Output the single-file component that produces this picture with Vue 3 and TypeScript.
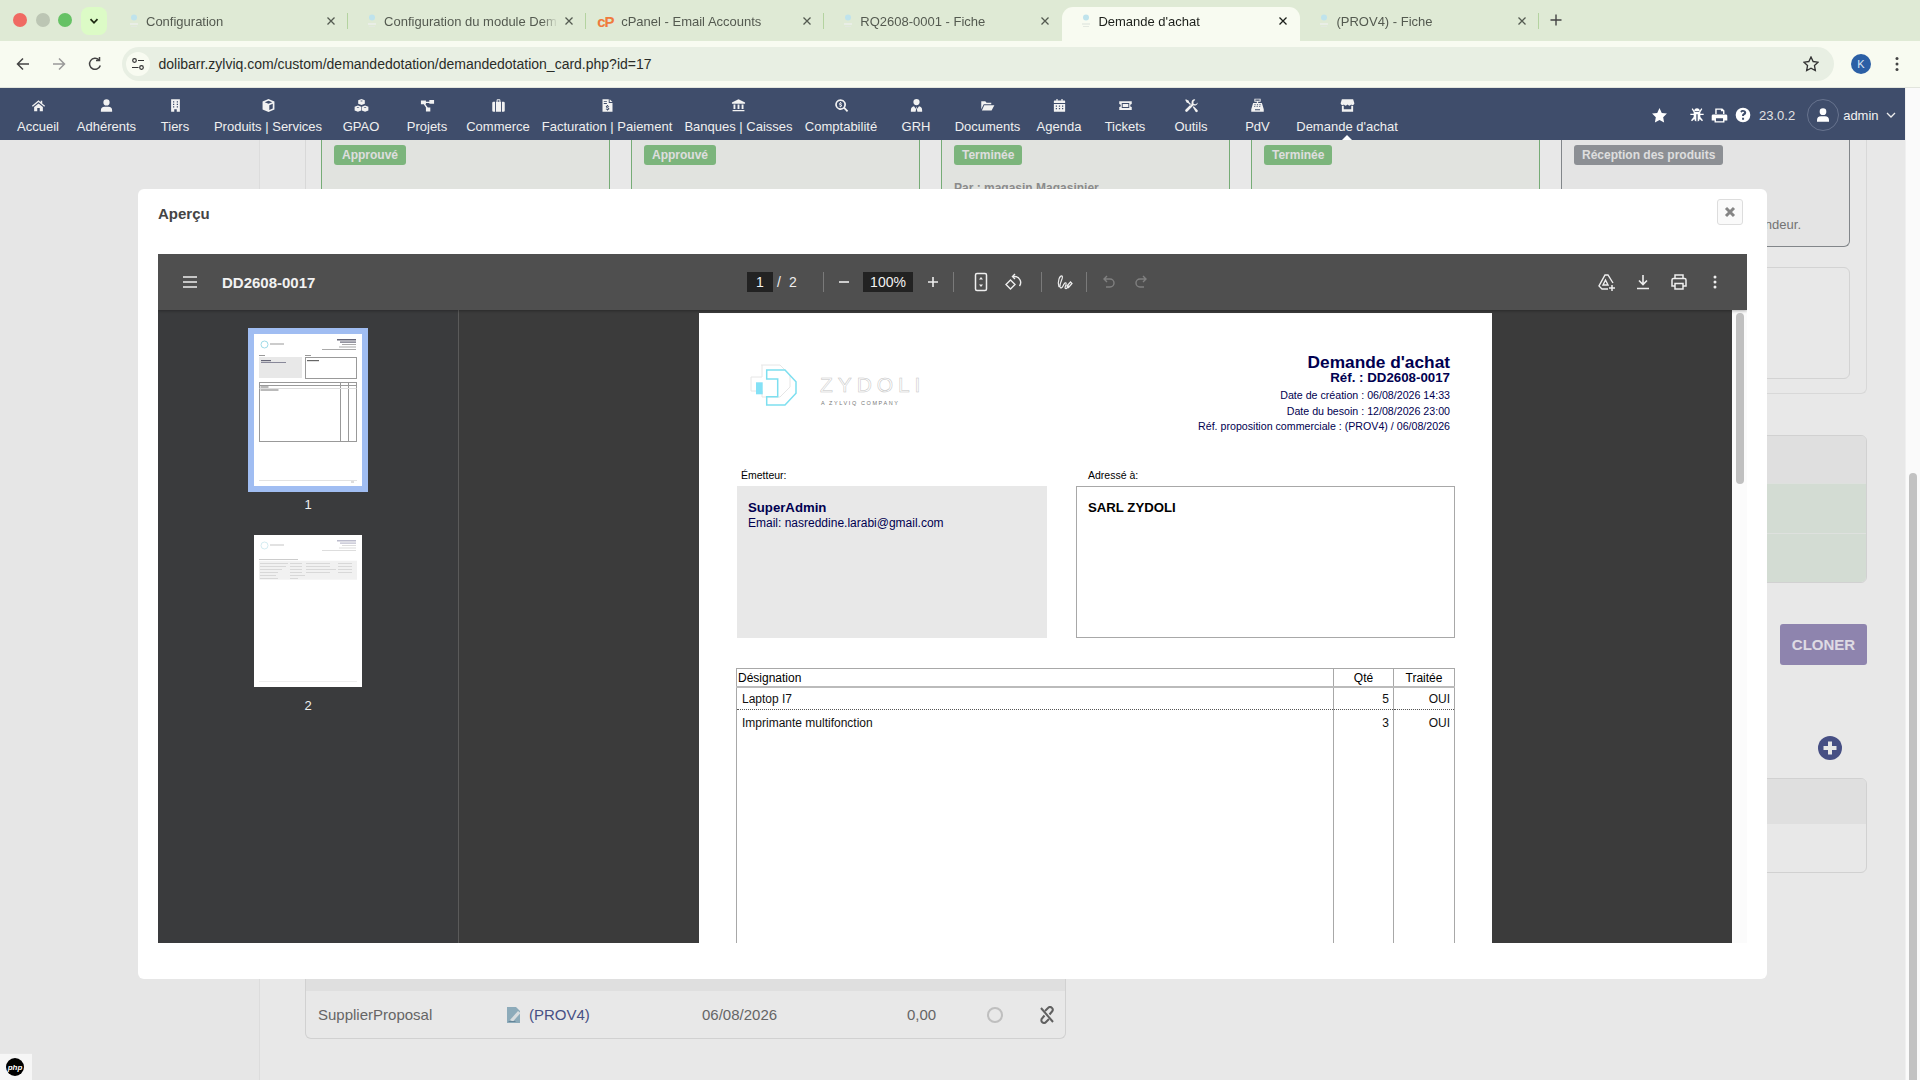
<template>
  <div class="screen">
    <header class="tabstrip">
      <div class="lights">
        <i class="light red"></i><i class="light grey"></i><i class="light green"></i>
      </div>
      <button class="tabsearch">
        <svg width="12" height="12" viewBox="0 0 12 12"><path d="M2.5 4.2 6 7.8l3.500-3.600" fill="none" stroke="#1d2a12" stroke-width="1.800" /></svg>
      </button>
      <div
        v-for="tab in tabs"
        :key="tab.title"
        class="tab"
        :class="{ active: tab.active, nosep: tab.nosep }"
      >
        <span v-if="tab.cpanel" class="fav-cp">cP</span>
        <svg v-else class="fav" width="12" height="16" viewBox="0 0 12 16">
          <circle cx="6" cy="4.500" r="3" fill="#bfe3ec" />
          <rect x="2" y="10" width="8" height="2" fill="#e9eee6" />
          <rect x="3" y="13" width="6" height="1" fill="#e3e8e0" />
        </svg>
        <span class="tab-title">{{ tab.title }}</span>
        <svg class="tab-close" width="10" height="10" viewBox="0 0 10 10"><path d="M1.500 1.500l7 7m0-7-7 7" stroke="currentColor" stroke-width="1.300" /></svg>
      </div>
      <svg class="newtab" width="12" height="12" viewBox="0 0 12 12"><path d="M6 .5v11M.5 6h11" stroke="#444" stroke-width="1.400" /></svg>
    </header>

    <div class="addressbar">
      <button class="chrome-btn">
        <svg width="16" height="16" viewBox="0 0 16 16"><path d="M14 8H3m5-5.500L2.500 8 8 13.500" fill="none" stroke="#444" stroke-width="1.500" /></svg>
      </button>
      <button class="chrome-btn">
        <svg width="16" height="16" viewBox="0 0 16 16"><path d="M2 8h11M8 2.500 13.500 8 8 13.500" fill="none" stroke="#999" stroke-width="1.500" /></svg>
      </button>
      <button class="chrome-btn">
        <svg width="16" height="16" viewBox="0 0 16 16"><path d="M13.300 9.500A5.500 5.500 0 1 1 12 4M12.500 1v3.500H9" fill="none" stroke="#444" stroke-width="1.500" /></svg>
      </button>
      <div class="omnibox">
        <span class="tune">
          <svg width="14" height="14" viewBox="0 0 14 14"><g fill="none" stroke="#333" stroke-width="1.200"><circle cx="3.500" cy="3.500" r="1.800" /><circle cx="10.500" cy="10.500" r="1.800" /><path d="M7 3.500h6M1 10.500h6.500" /></g></svg>
        </span>
        <span class="url">dolibarr.zylviq.com/custom/demandedotation/demandedotation_card.php?id=17</span>
        <svg class="url-star" width="16" height="16" viewBox="0 0 24 24"><path :d="icons.star" fill="none" stroke="#333" stroke-width="2" /></svg>
      </div>
      <span class="profile">K</span>
      <svg class="chrome-dots" width="4" height="16" viewBox="0 0 4 16"><circle cx="2" cy="2.500" r="1.500" /><circle cx="2" cy="8" r="1.500" /><circle cx="2" cy="13.500" r="1.500" /></svg>
    </div>

    <div class="viewport">
      <div class="site">
        <nav class="topnav">
          <a v-for="item in navItems" :key="item.label" class="nav-item" :class="{ current: item.current }">
            <svg width="15" height="15" viewBox="0 0 24 24"><path :d="icons[item.icon]" fill="#f2f2f2" fill-rule="evenodd" /></svg>
            <span>{{ item.label }}</span>
          </a>
          <div class="nav-tools">
            <svg class="t-star" width="17" height="17" viewBox="0 0 24 24"><path :d="icons.star" fill="#fff" /></svg>
            <svg class="t-bug" width="16" height="16" viewBox="0 0 24 24"><path :d="icons.bug" fill="#fff" fill-rule="evenodd" /></svg>
            <svg class="t-print" width="17" height="17" viewBox="0 0 24 24"><path :d="icons.print" fill="#fff" fill-rule="evenodd" /></svg>
            <svg class="t-help" width="16" height="16" viewBox="0 0 24 24"><path :d="icons.help" fill="#fff" fill-rule="evenodd" /></svg>
            <span class="version">23.0.2</span>
            <span class="avatar">
              <svg width="16" height="18" viewBox="0 0 24 24"><path :d="icons.user" fill="#fff" /></svg>
            </span>
            <span class="login">admin</span>
            <svg width="10" height="10" viewBox="0 0 10 10"><path d="M1 3l4 4 4-4" fill="none" stroke="#eee" stroke-width="1.300" /></svg>
          </div>
        </nav>

        <main class="page">
          <aside class="leftmenu"></aside>
          <div class="content">
            <section class="steps">
              <div class="step"><span class="badge ok">Approuvé</span></div>
              <div class="step"><span class="badge ok">Approuvé</span></div>
              <div class="step">
                <span class="badge ok">Terminée</span>
                <p class="step-by">Par : magasin Magasinier</p>
              </div>
              <div class="step"><span class="badge ok">Terminée</span></div>
              <div class="step-col">
                <div class="step waiting">
                  <span class="badge wait">Réception des produits</span>
                  <p class="step-note">Attente de la réception du vendeur.</p>
                </div>
                <div class="ghost-card"></div>
              </div>
            </section>

            <section class="lower">
              <div class="lower-left">
                <div class="links-card">
                  <div class="links-head"></div>
                  <div class="links-row">
                    <span>SupplierProposal</span>
                    <a class="prop-link">
                      <svg width="15" height="16" viewBox="0 0 15 16">
                        <path d="M0 0h9l4 4v12H0z" fill="#9cbccd" />
                        <path d="M3 13 11 4l2.500 2L6 14.500z" fill="#eef3f6" />
                        <path d="M1.500 14.500h7" stroke="#6f93a8" />
                      </svg>
                      (PROV4)
                    </a>
                    <span>06/08/2026</span>
                    <span>0,00</span>
                    <i class="status-dot"></i>
                    <svg width="16" height="18" viewBox="0 0 16 18">
                      <g fill="none" stroke="#6a6a6a" stroke-width="2">
                        <path d="M2 2l12 14" />
                        <path d="M6 5l3-3a2.500 2.500 0 0 1 4 3.500l-2.500 3" />
                        <path d="M10 13l-3 3a2.500 2.500 0 0 1-4-3.500l2.500-3" />
                      </g>
                    </svg>
                  </div>
                </div>
              </div>
              <div class="lower-right">
                <div class="items-card">
                  <div class="items-head"></div>
                  <div class="items-row"></div>
                  <div class="items-row"></div>
                </div>
                <button class="clone-btn">CLONER</button>
                <svg class="add-icon" width="24" height="24" viewBox="0 0 24 24">
                  <circle cx="12" cy="12" r="12" fill="#4e5792" />
                  <path d="M12 5.500v13M5.500 12h13" stroke="#fff" stroke-width="4" />
                </svg>
                <div class="notes-card">
                  <div class="notes-head"></div>
                </div>
              </div>
            </section>
          </div>
          <div class="backdrop"></div>
          <div class="php-tag">
            <span class="php-logo">php</span>
          </div>
        </main>
      </div>
      <div class="pagescroll"><i class="pagescroll-thumb"></i></div>
    </div>

    <div class="modal">
      <div class="modal-head">
        <span class="modal-title">Aperçu</span>
        <button class="modal-close">
          <svg width="12" height="12" viewBox="0 0 12 12"><path d="M2 2l8 8m0-8-8 8" stroke="#858585" stroke-width="3" /></svg>
        </button>
      </div>

      <div class="viewer">
        <div class="viewer-bar">
          <div class="bar-left">
            <svg width="20" height="20" viewBox="0 0 20 20"><path d="M3 5h14M3 10h14M3 15h14" stroke="#eee" stroke-width="1.500" /></svg>
            <span class="doc-name">DD2608-0017</span>
          </div>
          <span class="num-box page-box">1</span>
          <span class="page-of">/<b>2</b></span>
          <i class="bar-sep"></i>
          <button class="bar-btn zoom-out">
            <svg width="14" height="14" viewBox="0 0 14 14"><path d="M2 7h10" stroke="#eee" stroke-width="1.600" /></svg>
          </button>
          <span class="num-box zoom-box">100%</span>
          <button class="bar-btn zoom-in">
            <svg width="14" height="14" viewBox="0 0 14 14"><path d="M2 7h10M7 2v10" stroke="#eee" stroke-width="1.600" /></svg>
          </button>
          <i class="bar-sep"></i>
          <button class="bar-btn fit">
            <svg width="18" height="20" viewBox="0 0 18 20"><rect x="3.500" y="1.500" width="11" height="17" rx="1.500" fill="none" stroke="#eee" stroke-width="1.500" /><path d="M9 5l2 2.500H7zM9 15l2-2.500H7z" fill="#eee" /></svg>
          </button>
          <button class="bar-btn rotate">
            <svg width="20" height="20" viewBox="0 0 20 20"><g fill="none" stroke="#eee" stroke-width="1.400"><path d="M7.500 8l4.500 4.500-4.500 4.500L3 12.500z" /><path d="M10 4.500h1.500a6 6 0 0 1 5 9.500" /><path d="M12 2 9.500 4.500 12 7" /></g></svg>
          </button>
          <i class="bar-sep sep-ink"></i>
          <button class="bar-btn ink">
            <svg width="18" height="18" viewBox="0 0 18 18"><path d="M4 14C2 8 5 2 7 3c2 2-3 7-2 11 .5 1.500 2 1 3-1 1-2 2-4 3-3s-2 5-.5 5.500c1 .2 2.500-1.500 3-3M12 13l3.500-4 1.500 1.500-3.500 4z" fill="none" stroke="#eee" stroke-width="1.200" /></svg>
          </button>
          <i class="bar-sep"></i>
          <button class="bar-btn undo">
            <svg width="16" height="16" viewBox="0 0 16 16"><path d="M6 2 3 5l3 3M3 5h6a3.500 3.500 0 0 1 0 8H5" fill="none" stroke="#808080" stroke-width="1.400" /></svg>
          </button>
          <button class="bar-btn">
            <svg width="16" height="16" viewBox="0 0 16 16"><path d="M10 2l3 3-3 3M13 5H7a3.500 3.500 0 0 0 0 8h4" fill="none" stroke="#808080" stroke-width="1.400" /></svg>
          </button>
          <div class="bar-right">
            <button class="bar-btn wide">
              <svg width="20" height="20" viewBox="0 0 20 20"><g fill="none" stroke="#eee" stroke-width="1.400"><path d="M11 17H5l-3-3 6-11h3l5 8" /><path d="M8.500 8 6 13h5z" /></g><path d="M15 13v6M12 16h6" stroke="#eee" stroke-width="1.500" /></svg>
            </button>
            <button class="bar-btn wide">
              <svg width="18" height="18" viewBox="0 0 18 18"><path d="M9 2v9M5 7.500 9 11.500l4-4M3 15.500h12" fill="none" stroke="#eee" stroke-width="1.600" /></svg>
            </button>
            <button class="bar-btn wide">
              <svg width="18" height="18" viewBox="0 0 18 18"><g fill="none" stroke="#eee" stroke-width="1.500"><path d="M5 5V2h8v3" /><path d="M5 13H2V7a1.500 1.500 0 0 1 1.500-1.500h11A1.500 1.500 0 0 1 16 7v6h-3" /><path d="M5 10.500h8V16H5z" /></g></svg>
            </button>
            <button class="bar-btn wide">
              <svg width="4" height="14" viewBox="0 0 4 14"><circle cx="2" cy="2" r="1.500" fill="#eee" /><circle cx="2" cy="7" r="1.500" fill="#eee" /><circle cx="2" cy="12" r="1.500" fill="#eee" /></svg>
            </button>
          </div>
        </div>

        <div class="viewer-body">
          <div class="thumbs">
            <div class="thumb selected">
              <svg width="108" height="152" viewBox="0 0 108 152">
                <rect width="108" height="152" fill="#fff" />
                <circle cx="10.500" cy="10.500" r="3.500" fill="none" stroke="#9fdbe8" />
                <rect x="16" y="9" width="14" height="2" fill="#ccc" />
                <rect x="83" y="5" width="19" height="1.500" fill="#667" />
                <rect x="86" y="7.500" width="16" height="1.200" fill="#667" />
                <rect x="88" y="10" width="14" height="1" fill="#aaa" />
                <rect x="85" y="12.500" width="17" height="1" fill="#aaa" />
                <rect x="68" y="15" width="34" height="1" fill="#aaa" />
                <rect x="5" y="21" width="6" height="1" fill="#999" />
                <rect x="51" y="21" width="6" height="1" fill="#999" />
                <rect x="5" y="23" width="43" height="21" fill="#e8e8e8" />
                <rect x="7" y="26" width="10" height="1.200" fill="#667" />
                <rect x="7" y="28" width="25" height="1" fill="#889" />
                <rect x="51.500" y="23.500" width="51" height="21" fill="none" stroke="#999" />
                <rect x="53" y="26" width="12" height="1.200" fill="#666" />
                <rect x="5.500" y="48.500" width="97" height="59" fill="none" stroke="#999" />
                <path d="M86.500 48.500v59M94.500 48.500v59M5.500 51.500h97" stroke="#999" />
                <rect x="6.500" y="52.500" width="8" height="1" fill="#777" />
                <path d="M5.500 54.500h97" stroke="#ddd" />
                <rect x="6.500" y="55.500" width="18" height="1" fill="#777" />
                <path d="M5 146.500h98" stroke="#e2e2e2" />
                <rect x="97" y="147.500" width="3" height="1" fill="#bbb" />
              </svg>
            </div>
            <span class="thumb-num">1</span>
            <div class="thumb">
              <svg width="108" height="152" viewBox="0 0 108 152">
                <rect width="108" height="152" fill="#fff" />
                <circle cx="10.500" cy="10.500" r="3.500" fill="none" stroke="#d5edf2" />
                <rect x="16" y="9" width="14" height="2" fill="#e2e2e2" />
                <rect x="83" y="5" width="19" height="1.500" fill="#bbc" />
                <rect x="86" y="7.500" width="16" height="1.200" fill="#bbc" />
                <rect x="88" y="10" width="14" height="1" fill="#ddd" />
                <rect x="85" y="12.500" width="17" height="1" fill="#ddd" />
                <rect x="68" y="15" width="34" height="1" fill="#ddd" />
                <rect x="5" y="24" width="39" height="1" fill="#ccc" />
                <rect x="5" y="25.700" width="98" height="19" fill="#f1f1f1" />
                <g fill="#d2d2d2">
                  <rect x="6" y="28" width="28" height=".8" /><rect x="36" y="28" width="12" height=".8" /><rect x="52" y="28" width="24" height=".8" /><rect x="84" y="28" width="14" height=".8" />
                  <rect x="6" y="31" width="26" height=".8" /><rect x="36" y="31" width="12" height=".8" /><rect x="52" y="31" width="24" height=".8" /><rect x="84" y="31" width="14" height=".8" />
                  <rect x="6" y="34" width="22" height=".8" /><rect x="36" y="34" width="12" height=".8" /><rect x="52" y="34" width="30" height=".8" /><rect x="84" y="34" width="14" height=".8" />
                  <rect x="6" y="37" width="18" height=".8" /><rect x="36" y="37" width="12" height=".8" /><rect x="52" y="37" width="24" height=".8" /><rect x="84" y="37" width="14" height=".8" />
                  <rect x="6" y="40" width="16" height=".8" /><rect x="36" y="40" width="15" height=".8" />
                  <rect x="6" y="43" width="18" height=".8" /><rect x="36" y="43" width="8" height=".8" />
                </g>
                <path d="M5 146.500h98" stroke="#eee" />
              </svg>
            </div>
            <span class="thumb-num">2</span>
          </div>

          <div class="sheet-area">
            <article class="sheet">
              <div class="sheet-head">
                <div class="logo">
                  <svg width="70" height="60" viewBox="0 0 70 60">
                    <path d="M21.500 10H40l10 10v12L40 42H22v-6h-11V22h11V10z" fill="none" stroke="#e6e6e6" />
                    <path d="M26.700 15H45l11 11.700v11.600L45 50H26.700v-8.300h11V24h-11z" fill="none" stroke="#7ddff0" stroke-width="1.500" />
                    <rect x="16" y="27.300" width="6.700" height="12" fill="#84e1f6" />
                  </svg>
                  <div class="logo-text">
                    <span class="logo-name">ZYDOLI</span>
                    <span class="logo-tag">A ZYLVIQ COMPANY</span>
                  </div>
                </div>
                <div class="doc-meta">
                  <div class="doc-title">Demande d'achat</div>
                  <div class="doc-ref">Réf. : DD2608-0017</div>
                  <div class="doc-lines">
                    <div>Date de création : 06/08/2026 14:33</div>
                    <div>Date du besoin : 12/08/2026 23:00</div>
                    <div>Réf. proposition commerciale : (PROV4) / 06/08/2026</div>
                  </div>
                </div>
              </div>

              <div class="parties">
                <div class="party sender">
                  <div class="party-label">Émetteur:</div>
                  <div class="party-box">
                    <strong>SuperAdmin</strong>
                    <div class="party-mail">Email: nasreddine.larabi@gmail.com</div>
                  </div>
                </div>
                <div class="party receiver">
                  <div class="party-label">Adressé à:</div>
                  <div class="party-box">
                    <strong>SARL ZYDOLI</strong>
                  </div>
                </div>
              </div>

              <table class="lines">
                <thead>
                  <tr>
                    <th class="c-name">Désignation</th>
                    <th class="c-qty">Qté</th>
                    <th class="c-done">Traitée</th>
                  </tr>
                </thead>
                <tbody>
                  <tr v-for="line in lines" :key="line.name">
                    <td class="c-name">{{ line.name }}</td>
                    <td class="num">{{ line.qty }}</td>
                    <td class="num">OUI</td>
                  </tr>
                  <tr class="filler"><td></td><td></td><td></td></tr>
                </tbody>
              </table>
            </article>
          </div>

          <div class="viewer-scroll"><i class="viewer-thumb"></i></div>
        </div>
      </div>
    </div>
  </div>
</template>

<script setup lang="ts">
interface Tab {
  title: string
  active?: boolean
  cpanel?: boolean
  nosep?: boolean
}
interface NavItem {
  label: string
  icon: string
  current?: boolean
}

const tabs: Tab[] = [
  { title: 'Configuration' },
  { title: 'Configuration du module Dem' },
  { title: 'cPanel - Email Accounts', cpanel: true },
  { title: 'RQ2608-0001 - Fiche', nosep: true },
  { title: "Demande d'achat", active: true, nosep: true },
  { title: '(PROV4) - Fiche' },
]

const navItems: NavItem[] = [
  { label: 'Accueil', icon: 'home' },
  { label: 'Adhérents', icon: 'user' },
  { label: 'Tiers', icon: 'building' },
  { label: 'Produits | Services', icon: 'cube' },
  { label: 'GPAO', icon: 'cubes' },
  { label: 'Projets', icon: 'diagram' },
  { label: 'Commerce', icon: 'suitcase' },
  { label: 'Facturation | Paiement', icon: 'invoice' },
  { label: 'Banques | Caisses', icon: 'bank' },
  { label: 'Comptabilité', icon: 'search' },
  { label: 'GRH', icon: 'tie' },
  { label: 'Documents', icon: 'folder' },
  { label: 'Agenda', icon: 'calendar' },
  { label: 'Tickets', icon: 'ticket' },
  { label: 'Outils', icon: 'tools' },
  { label: 'PdV', icon: 'register' },
  { label: "Demande d'achat", icon: 'store', current: true },
]

const icons: Record<string, string> = {
  home: 'M12 3.500 1.500 12.500l1.300 1.500L12 6.300l9.200 7.700 1.300-1.500L18 8.700V4.500h-2.500v2.100zM5 14.500V21h5v-5h4v5h5v-6.500L12 8.600z',
  user: 'M12 12a5 5 0 1 0 0-10 5 5 0 0 0 0 10zm-3 2a6 6 0 0 0-6 6v2h18v-2a6 6 0 0 0-6-6z',
  building: 'M5 2h14v20h-5v-4h-4v4H5zM8 5v2h2V5zm6 0v2h2V5zM8 9v2h2V9zm6 0v2h2V9zM8 13v2h2v-2zm6 0v2h2v-2z',
  cube: 'M12 1.500 2.500 5.500v13l9.500 4 9.500-4v-13zM12 4.200l6 2.500-6 2.500-6-2.500zM13.300 11.400l5.500-2.300v7.700l-5.500 2.400z',
  cubes: 'M12 1.500l5.300 2v5.800L12 11.300 6.700 9.300V3.500zM6.300 12l5.200 2v6l-5.200 2L1 20v-6zM17.700 12l5.300 2v6l-5.300 2-5.200-2v-6zM12 3.800 9.600 4.700 12 5.600l2.400-.9zM6.300 14.200l-2.400.9 2.400.9 2.400-.9zM17.700 14.200l-2.400.9 2.400.9 2.400-.9z',
  diagram: 'M1.500 4h8v6h-8zM15 3h7.500v6H15zM9.500 15h7v6.500h-7zM9.500 6h5.500v2H9.500zM6 10h2.500l4 5h-3z',
  suitcase: 'M9 6V3.500A1.500 1.500 0 0 1 10.500 2h3A1.500 1.500 0 0 1 15 3.500V6h1v16H8V6zm1.500 0h3V3.500h-3zM6.500 6v16H4a2 2 0 0 1-2-2V8a2 2 0 0 1 2-2zM17.500 6H20a2 2 0 0 1 2 2v12a2 2 0 0 1-2 2h-2.500z',
  invoice: 'M4 2h10v6h6v14H4zM15.500 2l4.500 4.500h-4.500zM6 5v1.500h5V5zm0 3v1.500h5V8zM11.200 11h1.600v1.200c1 .1 1.800.6 2 1.100l-1 1c-.4-.4-1-.6-1.800-.6-.7 0-1 .2-1 .5 0 .8 4 .4 4 2.900 0 1.100-.9 1.800-2.200 2V20h-1.600v-1.100c-1-.1-1.900-.6-2.200-1.200l1-1c.5.5 1.200.8 2 .8s1.200-.3 1.200-.6c0-.9-3.900-.5-3.900-2.900 0-1 .8-1.700 1.900-1.900z',
  bank: 'M12 2 1.500 7v2h21V7zM4 10.500v7h3v-7zm6.500 0v7h3v-7zm6.500 0v7h3v-7zM2.500 19v2h19v-2z',
  search: 'M10.500 2a8.500 8.500 0 1 0 5.200 15.200l5 5 2-2-5-5A8.500 8.500 0 0 0 10.500 2zm0 2.600a5.900 5.900 0 1 1 0 11.800 5.900 5.900 0 0 1 0-11.800zM9.800 6.500v1.100c-1 .2-1.700.9-1.700 1.800 0 2 3.400 1.500 3.400 2.500 0 .3-.4.5-1 .5s-1.100-.2-1.600-.6l-.8.9c.4.5 1 .8 1.700 1v1h1.400v-1c1-.2 1.700-.9 1.700-1.800 0-2.100-3.400-1.600-3.400-2.600 0-.2.3-.4.9-.4.5 0 1 .2 1.400.5l.8-.9c-.4-.4-.9-.7-1.400-.8V6.500z',
  tie: 'M12 11.500a5 5 0 1 0 0-10 5 5 0 0 0 0 10zM8 13.200A6 6 0 0 0 3 19v3h7.500L12 15l1.500 7H21v-3a6 6 0 0 0-5-5.800L13.200 17 12 13.500 10.800 17z',
  folder: 'M2 5h6.500l2 2.500H18V10H6L2 18zM6.800 11.500H23L18.500 20H3z',
  calendar: 'M7 1.500h2V4h6V1.500h2V4h3a1 1 0 0 1 1 1v3H3V5a1 1 0 0 1 1-1h3zM3 9.500h18V21a1 1 0 0 1-1 1H4a1 1 0 0 1-1-1zM6 12v2h2v-2zm5 0v2h2v-2zm5 0v2h2v-2zM6 16v2h2v-2zm5 0v2h2v-2zm5 0v2h2v-2z',
  ticket: 'M2 5h20v4.500a2.500 2.500 0 0 0 0 5V19H2v-4.500a2.500 2.500 0 0 0 0-5zM6 8v8h12V8zM7.500 9.500h9v5h-9z',
  tools: 'M17 2a5 5 0 0 0-4.700 6.700L2.500 18.500a2.100 2.100 0 0 0 3 3l9.800-9.800A5 5 0 0 0 22 7l-3 3-3.500-.5L15 6l3-3.200A5 5 0 0 0 17 2zM3 2 2 3l2.500 4.500 2 .3 4 4 1.500-1.500-4-4-.3-2zM14 14.500l1.500-1.500 6 6a2 2 0 0 1-3 3z',
  register: 'M7 1h10v5h-4v2h6l3 10v4H2v-4L5 8h6V6H7zM8.500 2.500v2h7v-2zM7 10v1.500h2V10zm4 0v1.500h2V10zm4 0v1.500h2V10zM6.500 13v1.500h2V13zm4 0v1.500h2V13zm4 0v1.500h2V13zM8 18v1.500h8V18z',
  store: 'M3 2h18l2 6.500a3 3 0 0 1-5 2 4 4 0 0 1-6 0 4 4 0 0 1-6 0 3 3 0 0 1-5-2zM3 12.500h3V18h12v-5.500h3V22H3z',
  star: 'M12 1.500l3.200 6.800 7.300 1-5.300 5.100 1.300 7.400L12 18.300l-6.500 3.500 1.300-7.400L1.500 9.300l7.300-1z',
  bug: 'M8 6a4 4 0 0 1 8 0zM4 3l1.500-1L9 7h6l3.500-5L20 3l-3 5v2h5v2h-5v3l4 5-1.500 1.500L16 18a4 4 0 0 1-3 3.800V11h-2v10.800A4 4 0 0 1 8 18l-3.500 3.500L3 20l4-5v-3H2v-2h5V8z',
  print: 'M6 2h10l3 3v5h-2V6h-3V4H8v6H6zM3 10.500h18a2 2 0 0 1 2 2V19h-4v3H5v-3H1v-6.500a2 2 0 0 1 2-2zM7 16v4h10v-4z',
  help: 'M12 1a11 11 0 1 0 0 22 11 11 0 0 0 0-22zm0 3.500c2.800 0 4.800 1.700 4.800 4 0 2.400-2 3.100-3.200 4v1h-3v-1.500c0-1.800 3-2.300 3-3.600 0-.7-.7-1.200-1.700-1.200-1 0-1.800.5-2.400 1.300L8 6.500c1-1.300 2.300-2 4-2zM10.600 16h3v3h-3z',
}

const lines = [
  { name: 'Laptop I7', qty: 5 },
  { name: 'Imprimante multifonction', qty: 3 },
]
</script>

<style>
html,
body {
  margin: 0;
  overflow: hidden;
}
</style>

<style scoped>
.screen {
  position: relative;
  width: 1920px;
  height: 1080px;
  overflow: hidden;
  display: flex;
  flex-direction: column;
  background: #fff;
  font-family: "Liberation Sans", Arial, sans-serif;
}
button {
  border: 0;
  padding: 0;
  background: none;
  display: flex;
  align-items: center;
  justify-content: center;
}

/* browser chrome */
.tabstrip {
  height: 41px;
  flex: none;
  display: flex;
  align-items: flex-end;
  background: #dfead5;
}
.lights {
  display: flex;
  gap: 8.500px;
  margin: 0 0 14px 13px;
}
.light {
  width: 14px;
  height: 14px;
  border-radius: 50%;
}
.red { background: #f06a63; }
.grey { background: #bcc6b4; }
.green { background: #66c265; }
.tabsearch {
  width: 26px;
  height: 28px;
  margin: 0 3px 6px 9px;
  border-radius: 8px;
  background: #dcfbc6;
}
.tab {
  position: relative;
  width: 238.100px;
  height: 34px;
  flex: none;
  display: flex;
  align-items: center;
  padding: 0 12px 6px 18px;
  box-sizing: border-box;
  font-size: 13px;
  color: #545a50;
}
.tab::after {
  content: "";
  position: absolute;
  right: 0;
  top: 6px;
  height: 16px;
  width: 1px;
  background: #b4d3a0;
}
.tab.nosep::after,
.tab.active::after {
  display: none;
}
.tab.active {
  background: #f8fbf1;
  color: #1c1f1a;
  border-radius: 11px 11px 0 0;
}
.fav {
  margin-right: 6px;
  flex: none;
}
.fav-cp {
  width: 17px;
  margin: 0 7px 0 -7px;
  flex: none;
  font-size: 15px;
  font-weight: 700;
  letter-spacing: -1px;
  color: #ef7b3c;
}
.tab-title {
  flex: 1;
  overflow: hidden;
  white-space: nowrap;
  -webkit-mask-image: linear-gradient(to left, transparent 0, #000 16px);
  mask-image: linear-gradient(to left, transparent 0, #000 16px);
}
.tab-close {
  margin-left: 6px;
  flex: none;
}
.newtab {
  margin: 0 0 15px 11px;
}
.addressbar {
  height: 47px;
  flex: none;
  display: flex;
  align-items: center;
  padding-left: 5px;
  box-sizing: border-box;
  background: #f8fbf1;
  border-bottom: 1px solid #e2e5dd;
}
.chrome-btn {
  width: 36px;
  height: 34px;
}
.omnibox {
  width: 1712px;
  height: 34px;
  margin-left: 9px;
  display: flex;
  align-items: center;
  border-radius: 17px;
  background: #e8efe3;
}
.tune {
  width: 24px;
  height: 24px;
  margin-left: 4px;
  display: flex;
  align-items: center;
  justify-content: center;
  border-radius: 50%;
  background: #f8fbf1;
}
.url {
  margin-left: 8.500px;
  font-size: 14px;
  color: #2a2c28;
}
.url-star {
  margin-left: auto;
  margin-right: 15px;
}
.profile {
  width: 20px;
  height: 20px;
  margin-left: 17px;
  display: flex;
  align-items: center;
  justify-content: center;
  border-radius: 50%;
  background: #2b5fa5;
  color: #dbe6f5;
  font-size: 11px;
}
.chrome-dots {
  margin-left: 24px;
  fill: #444;
}

/* site */
.viewport {
  flex: 1;
  min-height: 0;
  display: flex;
}
.site {
  flex: 1;
  min-width: 0;
  display: flex;
  flex-direction: column;
}
.pagescroll {
  width: 15px;
  flex: none;
  background: #fafafa;
  border-left: 1px solid #f0f0f0;
  box-sizing: border-box;
  padding: 385px 3px 0 3px;
}
.pagescroll-thumb {
  display: block;
  height: 620px;
  border-radius: 4px;
  background: #c2c2c2;
}
.topnav {
  height: 52px;
  flex: none;
  padding-left: 4px;
  display: grid;
  grid-template-columns: 68px 69px 68px 118px 68px 64px 78px 140px 123px 82px 68px 75px 68px 64px 68px 65px 114px 1fr;
  background: #3f4d6b;
}
.nav-item {
  position: relative;
  display: flex;
  flex-direction: column;
  align-items: center;
  padding-top: 10px;
  color: #f0f0f0;
  font-size: 13px;
  white-space: nowrap;
}
.nav-item span {
  margin-top: 6px;
}
.nav-item.current::after {
  content: "";
  position: absolute;
  left: 50%;
  bottom: 0;
  margin-left: -5px;
  border-left: 5px solid transparent;
  border-right: 5px solid transparent;
  border-bottom: 5px solid #fff;
}
.nav-tools {
  display: flex;
  align-items: center;
  color: #e2e2e2;
  padding-top: 2px;
}
.t-star { margin-left: 247px; }
.t-bug { margin-left: 21px; }
.t-print { margin-left: 6px; }
.t-help { margin-left: 7px; }
.version {
  margin-left: 8px;
  font-size: 13px;
}
.avatar {
  width: 32px;
  height: 32px;
  margin-left: 12px;
  box-sizing: border-box;
  display: flex;
  align-items: center;
  justify-content: center;
  border: 1px solid #67738e;
  border-radius: 50%;
}
.login {
  margin: 0 7px 0 4px;
  font-size: 13px;
  color: #f2f2f2;
}
.page {
  position: relative;
  flex: 1;
  min-height: 0;
  display: flex;
  overflow: hidden;
}
.leftmenu {
  width: 260px;
  flex: none;
  box-sizing: border-box;
  background: #fdfdfd;
  border-right: 1px solid #f2f2f2;
}
.content {
  flex: 1;
  min-width: 0;
  padding: 0 38px 0 45px;
}
.backdrop {
  position: absolute;
  inset: 0;
  background: rgba(0, 0, 0, 0.09);
}
.steps {
  height: 254px;
  box-sizing: border-box;
  display: flex;
  align-items: flex-start;
  gap: 21px;
  padding-left: 15px;
  border: 1px solid #eeeeee;
  border-top: 0;
  border-radius: 0 0 6px 6px;
}
.step {
  width: 289px;
  height: 160px;
  flex: none;
  box-sizing: border-box;
  padding: 5px 12px 0;
  border: 1px solid #82bd82;
  border-top: 0;
  background: #f8faf6;
}
.step-col {
  width: 289px;
  flex: none;
}
.step.waiting {
  height: 107px;
  background: #fbfbfb;
  border-color: #8f9498;
  border-radius: 0 0 6px 6px;
}
.step-by {
  margin: 16px 0 0;
  font-size: 12px;
  line-height: 14px;
  font-weight: 700;
  color: #999;
}
.step-note {
  margin: 52px 36px 0 0;
  text-align: right;
  font-size: 13px;
  line-height: 15px;
  color: #7f7f7f;
  white-space: nowrap;
}
.badge {
  display: inline-block;
  padding: 0 8px;
  height: 20px;
  line-height: 20px;
  border-radius: 3px;
  font-size: 12px;
  font-weight: 700;
  color: #f4f4f4;
}
.ok { background: #89c789; }
.wait { background: #9a9ea3; }
.ghost-card {
  height: 112px;
  margin-top: 20px;
  box-sizing: border-box;
  border: 1px solid #e8e8e8;
  border-radius: 6px;
}
.lower {
  display: grid;
  grid-template-columns: 761px 1fr;
  gap: 24px;
  margin-top: 41px;
}
.links-card {
  margin-top: 515px;
  height: 89px;
  box-sizing: border-box;
  border: 1px solid #e6e6e6;
  border-top: 0;
  border-radius: 0 0 6px 6px;
}
.links-head {
  height: 41px;
  background: #f6f6f6;
}
.links-row {
  height: 47px;
  padding-left: 12px;
  display: grid;
  grid-template-columns: 189px 195px 205px 80px 52px auto;
  align-items: center;
  font-size: 15px;
  color: #707070;
}
.prop-link {
  display: flex;
  align-items: center;
  gap: 7px;
  color: #4e5792;
}
.status-dot {
  width: 16px;
  height: 16px;
  box-sizing: border-box;
  border: 2px solid #d2d2d2;
  border-radius: 50%;
}
.lower-right {
  display: flex;
  flex-direction: column;
  align-items: flex-end;
}
.items-card {
  width: 100%;
  height: 148px;
  box-sizing: border-box;
  overflow: hidden;
  border: 1px solid #e6e6e6;
  border-radius: 6px;
}
.items-head {
  height: 47px;
  background: #f6f6f6;
}
.items-row {
  height: 49.500px;
  background: #e8f2e8;
  border-top: 1px solid #f4f8f4;
  box-sizing: border-box;
}
.clone-btn {
  width: 87px;
  height: 41px;
  margin-top: 41px;
  border-radius: 3px;
  background: #9d92c0;
  color: #f4f1fb;
  font: 700 15px "Liberation Sans", Arial, sans-serif;
}
.add-icon {
  margin: 71px 25px 0 0;
}
.notes-card {
  width: 100%;
  height: 95px;
  margin-top: 18px;
  box-sizing: border-box;
  overflow: hidden;
  border: 1px solid #e6e6e6;
  border-radius: 6px;
}
.notes-head {
  height: 45px;
  background: #f6f6f6;
}
.php-tag {
  position: absolute;
  left: 0;
  bottom: 0;
  width: 32px;
  height: 27px;
  box-sizing: border-box;
  display: flex;
  align-items: center;
  justify-content: center;
  background: #f6f6f6;
  border-top: 1px solid #e8e8e8;
  padding-right: 2px;
}
.php-logo {
  width: 18px;
  height: 18px;
  display: flex;
  align-items: center;
  justify-content: center;
  border-radius: 50%;
  background: #000;
  color: #fff;
  font-size: 8px;
  font-weight: 700;
  font-style: italic;
}

/* preview dialog */
.modal {
  position: absolute;
  left: 138px;
  top: 189px;
  width: 1629px;
  height: 790px;
  box-sizing: border-box;
  padding: 0 20px;
  background: #fff;
  border-radius: 6px;
}
.modal-head {
  height: 65px;
  display: flex;
  align-items: flex-start;
  justify-content: space-between;
  padding-top: 10px;
  box-sizing: border-box;
}
.modal-title {
  margin-top: 6px;
  font-size: 15px;
  font-weight: 700;
  color: #444;
}
.modal-close {
  width: 26px;
  height: 26px;
  margin-right: 4px;
  box-sizing: border-box;
  border: 1px solid #ddd;
  border-radius: 3px;
  background: #fafafa;
}
.viewer {
  width: 1589px;
  height: 689px;
  display: flex;
  flex-direction: column;
  overflow: hidden;
}
.viewer-bar {
  height: 56px;
  flex: none;
  display: flex;
  align-items: center;
  background: #4f4f4f;
  box-shadow: 0 1px 3px rgba(0, 0, 0, 0.3);
  color: #eee;
  font-size: 14px;
  z-index: 1;
}
.bar-left {
  width: 589px;
  flex: none;
  display: flex;
  align-items: center;
  padding-left: 22px;
  box-sizing: border-box;
}
.doc-name {
  margin-left: 22px;
  font-size: 15px;
  font-weight: 700;
  color: #f2f2f2;
}
.num-box {
  height: 20px;
  line-height: 20px;
  text-align: center;
  background: #222;
  color: #f2f2f2;
}
.page-box { width: 26px; }
.zoom-box { width: 50px; }
.page-of {
  width: 50px;
  box-sizing: border-box;
  padding-left: 4px;
}
.page-of b {
  font-weight: 400;
  margin-left: 8px;
}
.bar-sep {
  width: 1px;
  height: 20px;
  flex: none;
  background: #7a7a7a;
}
.bar-btn {
  width: 32px;
  height: 28px;
  flex: none;
}
.zoom-out { width: 39px; }
.zoom-in { width: 40px; }
.fit { margin-left: 11px; }
.rotate { margin-right: 12px; }
.ink { width: 44px; }
.undo { margin-left: 6px; }
.bar-right {
  margin-left: auto;
  display: flex;
  padding-right: 14px;
}
.bar-btn.wide { width: 36px; }
.viewer-body {
  flex: 1;
  min-height: 0;
  display: flex;
}
.thumbs {
  width: 301px;
  flex: none;
  box-sizing: border-box;
  display: flex;
  flex-direction: column;
  align-items: center;
  padding-top: 24px;
  background: #3a3b3d;
  border-right: 1px solid #5a5a5a;
}
.thumb {
  display: flex;
  line-height: 0;
}
.thumb.selected {
  outline: 6px solid #a0bdf2;
}
.thumb-num {
  margin: 12px 0 24px;
  height: 13px;
  line-height: 13px;
  font-size: 13px;
  color: #f0f0f0;
}
.sheet-area {
  flex: 1;
  min-width: 0;
  display: flex;
  justify-content: center;
  overflow: hidden;
  padding-top: 3px;
  background: #3b3b3b;
}
.sheet {
  width: 793px;
  height: 1122px;
  flex: none;
  box-sizing: border-box;
  padding: 40px 37px 0 38px;
  background: #fff;
  color: #000;
}
.viewer-scroll {
  width: 15px;
  flex: none;
  box-sizing: border-box;
  padding: 3px 3px 0 4px;
  background: #fbfbfb;
}
.viewer-thumb {
  display: block;
  height: 171px;
  border-radius: 4px;
  background: #c0c0c0;
}

/* document */
.sheet-head {
  display: flex;
  justify-content: space-between;
  height: 82px;
}
.logo {
  display: flex;
  margin: 2px 0 0 3px;
  height: 60px;
}
.logo-text {
  display: flex;
  flex-direction: column;
  margin: 21px 0 0 10px;
}
.logo-name {
  font-size: 21px;
  line-height: 17px;
  letter-spacing: 4.900px;
  color: transparent;
  -webkit-text-stroke: 0.5px #c4c4c4;
}
.logo-tag {
  margin-top: 7px;
  padding-left: 1px;
  font-size: 5.500px;
  line-height: 7px;
  letter-spacing: 1.600px;
  color: #777;
}
.doc-meta {
  padding-right: 5px;
  text-align: right;
  color: #000050;
}
.doc-title {
  font-size: 17.300px;
  line-height: 18px;
  font-weight: 700;
}
.doc-ref {
  font-size: 13.300px;
  line-height: 14px;
  font-weight: 700;
}
.doc-lines {
  margin-top: 3px;
  font-size: 10.650px;
  line-height: 15.500px;
}
.parties {
  display: flex;
  gap: 29px;
  margin-top: 34px;
}
.party-label {
  height: 12px;
  line-height: 12px;
  font-size: 10.500px;
  margin-bottom: 5px;
}
.party-box {
  height: 152px;
  box-sizing: border-box;
}
.party strong {
  display: block;
  font-size: 13.200px;
  line-height: 16px;
}
.sender { width: 310px; }
.sender .party-label { padding-left: 4px; }
.sender .party-box {
  padding: 14px 11px;
  background: #e8e8e8;
  color: #000050;
}
.party-mail {
  margin-top: 0;
  font-size: 12px;
  line-height: 14px;
}
.receiver { width: 379px; }
.receiver .party-label { padding-left: 12px; }
.receiver .party-box {
  padding: 13px 11px;
  border: 1.500px solid #a8a8a8;
}
.lines {
  width: 719px;
  margin: 30px 0 0 -1px;
  border-collapse: collapse;
  table-layout: fixed;
  font-size: 12px;
  border: 1.500px solid #a8a8a8;
}
.lines th {
  height: 17px;
  padding: 0;
  font-weight: 400;
  line-height: 14px;
  border-left: 1px solid #a8a8a8;
  border-bottom: 2px solid #bbb;
}
.lines th.c-name {
  padding-left: 1px;
  text-align: left;
  border-left: 0;
}
.c-qty { width: 59px; }
.c-done { width: 60px; }
.lines td {
  height: 21px;
  padding: 0 4px 0 4px;
  line-height: 14px;
  color: #111;
  border-left: 1px solid #a8a8a8;
  border-bottom: 1px dotted #555;
}
.lines td.c-name {
  padding-left: 5px;
  border-left: 0;
}
.lines tbody tr:nth-child(2) td {
  height: 24px;
  padding-top: 1px;
  border-bottom: 0;
}
.num { text-align: right; }
.lines .filler td {
  height: 400px;
  border-bottom: 0;
}
.lines .filler td:first-child {
  border-left: 0;
}
</style>
